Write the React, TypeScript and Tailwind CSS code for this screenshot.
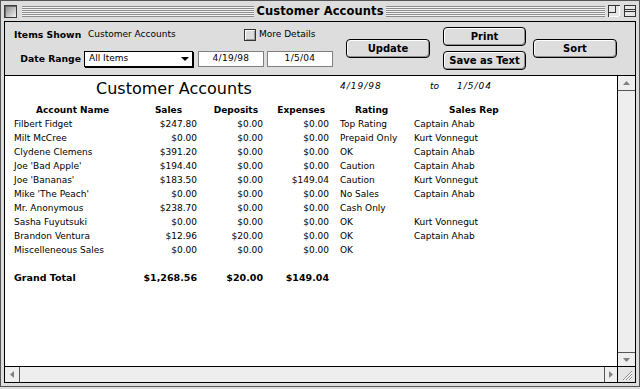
import React from "react";

const rows = [
  ["Filbert Fidget", "$247.80", "$0.00", "$0.00", "Top Rating", "Captain Ahab"],
  ["Milt McCree", "$0.00", "$0.00", "$0.00", "Prepaid Only", "Kurt Vonnegut"],
  ["Clydene Clemens", "$391.20", "$0.00", "$0.00", "OK", "Captain Ahab"],
  ["Joe 'Bad Apple'", "$194.40", "$0.00", "$0.00", "Caution", "Captain Ahab"],
  ["Joe 'Bananas'", "$183.50", "$0.00", "$149.04", "Caution", "Kurt Vonnegut"],
  ["Mike 'The Peach'", "$0.00", "$0.00", "$0.00", "No Sales", "Captain Ahab"],
  ["Mr. Anonymous", "$238.70", "$0.00", "$0.00", "Cash Only", ""],
  ["Sasha Fuyutsuki", "$0.00", "$0.00", "$0.00", "OK", "Kurt Vonnegut"],
  ["Brandon Ventura", "$12.96", "$20.00", "$0.00", "OK", "Captain Ahab"],
  ["Miscelleneous Sales", "$0.00", "$0.00", "$0.00", "OK", ""],
];

const gridCols = "grid grid-cols-[116px_67px_66px_66px_85px_1fr] pl-[9px] h-[14px] items-center leading-[14px]";

function Stripes({ className = "" }: { className?: string }) {
  return (
    <div className={`flex flex-col h-[11px] bg-[#f4f4f4] justify-between ${className}`}>
      {Array.from({ length: 6 }).map((_, i) => (
        <div key={i} className="h-[1px] bg-[#8c8c8c]" />
      ))}
    </div>
  );
}

function TitleBar() {
  return (
    <div className="h-[20px] flex items-center">
      {/* close box */}
      <div className="ml-[3px] w-[13px] h-[13px] border border-[#3c3c3c] bg-gradient-to-br from-[#8a8a8a] to-[#f2f2f2] shadow-[inset_1px_1px_0_#6a6a6a]" />
      <Stripes className="ml-[5px] w-[232px]" />
      <div className="w-[132px] text-center font-bold text-[11.5px] leading-[14px] tracking-[0.1px]">
        Customer Accounts
      </div>
      <Stripes className="flex-1" />
      {/* zoom box */}
      <svg className="ml-[3px]" width="12" height="12" viewBox="0 0 12 12">
        <rect x="0.5" y="0.5" width="11" height="11" fill="#e6e6e6" stroke="#333" />
        <rect x="0.5" y="0.5" width="7" height="7" fill="none" stroke="#333" />
        <path d="M1 11.5H11.5V1" stroke="#fff" fill="none" />
      </svg>
      {/* collapse box */}
      <svg className="ml-[4px] mr-[3px]" width="12" height="12" viewBox="0 0 12 12">
        <rect x="0.5" y="0.5" width="11" height="11" fill="#e6e6e6" stroke="#333" />
        <path d="M1 4.5H11M1 6.5H11" stroke="#333" />
      </svg>
    </div>
  );
}

function MacButton({ children, className = "" }: { children: React.ReactNode; className?: string }) {
  return (
    <div
      className={`h-[19px] rounded-[4px] border border-black bg-[#dddddd] shadow-[inset_1px_1px_0_#ffffff,inset_-1px_-1px_0_#8f8f8f] flex items-center justify-center text-[10px] font-bold leading-none ${className}`}
    >
      {children}
    </div>
  );
}

function Toolbar() {
  return (
    <div className="h-[53px] flex text-[9px]">
      <div className="w-[328px] flex flex-col">
        <div className="mt-[6px] h-[14px] flex items-center pl-[9px]">
          <span className="w-[74px] font-bold text-[9.25px]">Items Shown</span>
          <span className="w-[156px]">Customer Accounts</span>
          <span className="w-[12px] h-[12px] border border-[#333] bg-[#dcdcdc] shadow-[inset_1px_1px_0_#ffffff,inset_-1px_-1px_0_#9a9a9a]" />
          <span className="ml-[3px]">More Details</span>
        </div>
        <div className="mt-[9px] h-[17px] flex items-start">
          <span className="w-[76px] text-right font-bold text-[9.25px] leading-[16px]">Date Range</span>
          <div className="ml-[3px] w-[109px] h-[16px] border border-black bg-white shadow-[1px_1px_0_#000] flex items-center pl-[4px] pr-[3px]">
            <span>All Items</span>
            <svg className="ml-auto" width="8" height="4" viewBox="0 0 8 4">
              <path d="M0 0H8L4 4z" fill="#000" />
            </svg>
          </div>
          <div className="ml-[5px] w-[66px] h-[16px] border border-[#808080] bg-white flex items-center justify-center tracking-[0.3px]">
            4/19/98
          </div>
          <div className="ml-[3px] w-[66px] h-[16px] border border-[#808080] bg-white flex items-center justify-center tracking-[0.3px]">
            1/5/04
          </div>
        </div>
      </div>
      <MacButton className="ml-[13px] mt-[17px] w-[84px]">Update</MacButton>
      <div className="ml-[13px] w-[83px] flex flex-col">
        <MacButton className="mt-[5px]">Print</MacButton>
        <MacButton className="mt-[5px]">Save as Text</MacButton>
      </div>
      <MacButton className="ml-[7px] mt-[17px] w-[84px]">Sort</MacButton>
    </div>
  );
}

function Report() {
  return (
    <div className="flex-1 bg-white text-[9px]">
      <div className="h-[27px] flex items-start">
        <div className="ml-[91px] mt-[4px] w-[244px] text-[16px] leading-[18px]">Customer Accounts</div>
        <div className="mt-[4px] w-[90px] italic tracking-[1px] leading-[12px]">4/19/98</div>
        <div className="mt-[4px] w-[27px] italic leading-[12px]">to</div>
        <div className="mt-[4px] italic tracking-[1px] leading-[12px]">1/5/04</div>
      </div>
      <div className={`${gridCols} font-bold`}>
        <span className="pl-[22px]">Account Name</span>
        <span className="text-right pr-[15px]">Sales</span>
        <span className="text-right pr-[5px]">Deposits</span>
        <span className="text-right pr-[4px]">Expenses</span>
        <span className="pl-[26px]">Rating</span>
        <span className="pl-[35px]">Sales Rep</span>
      </div>
      {rows.map((r) => (
        <div key={r[0]} className={gridCols}>
          <span>{r[0]}</span>
          <span className="text-right">{r[1]}</span>
          <span className="text-right">{r[2]}</span>
          <span className="text-right">{r[3]}</span>
          <span className="pl-[11px]">{r[4]}</span>
          <span>{r[5]}</span>
        </div>
      ))}
      <div className="h-[14px]" />
      <div className={`${gridCols} font-bold text-[9.5px]`}>
        <span>Grand Total</span>
        <span className="text-right">$1,268.56</span>
        <span className="text-right">$20.00</span>
        <span className="text-right">$149.04</span>
        <span />
        <span />
      </div>
    </div>
  );
}

function VScroll() {
  return (
    <div className="w-[18px] border-l border-black bg-[#eeeeee] flex flex-col">
      <div className="h-[15px] border-b border-[#555] flex items-center justify-center">
        <svg width="7" height="4" viewBox="0 0 7 4">
          <path d="M3.5 0L7 4H0z" fill="#808080" />
        </svg>
      </div>
      <div className="flex-1" />
      <div className="h-[14px] border-t border-[#555] flex items-center justify-center">
        <svg width="7" height="4" viewBox="0 0 7 4">
          <path d="M0 0H7L3.5 4z" fill="#808080" />
        </svg>
      </div>
    </div>
  );
}

function HScroll() {
  return (
    <div className="h-[16px] border-t border-black flex bg-[#eeeeee]">
      <div className="w-[15px] border-r border-[#555] flex items-center justify-center">
        <svg width="4" height="7" viewBox="0 0 4 7">
          <path d="M0 3.5L4 0V7z" fill="#808080" />
        </svg>
      </div>
      <div className="flex-1" />
      <div className="w-[13px] border-l border-[#555] flex items-center justify-center">
        <svg width="4" height="7" viewBox="0 0 4 7">
          <path d="M4 3.5L0 0V7z" fill="#808080" />
        </svg>
      </div>
      <div className="w-[18px] border-l border-black bg-[#e4e4e4] flex items-center justify-center">
        <svg width="13" height="13" viewBox="0 0 13 13">
          <path d="M3 12L12 3M6 12L12 6M9 12L12 9" stroke="#8a8a8a" />
          <path d="M4 12L12 4M7 12L12 7M10 12L12 10" stroke="#ffffff" />
        </svg>
      </div>
    </div>
  );
}

export default function App() {
  return (
    <div className="w-[640px] h-[389px] bg-[#dddddd] font-['DejaVu_Sans',sans-serif] text-black select-none">
      <div className="h-[387px] flex flex-col border border-[#555555] bg-[#dddddd]">
        <TitleBar />
        <div className="flex-1 flex px-[3px] pb-[3px]">
          <div className="flex-1 flex flex-col border border-black">
            <Toolbar />
            <div className="flex-1 flex border-t border-black">
              <Report />
              <VScroll />
            </div>
            <HScroll />
          </div>
        </div>
      </div>
    </div>
  );
}
